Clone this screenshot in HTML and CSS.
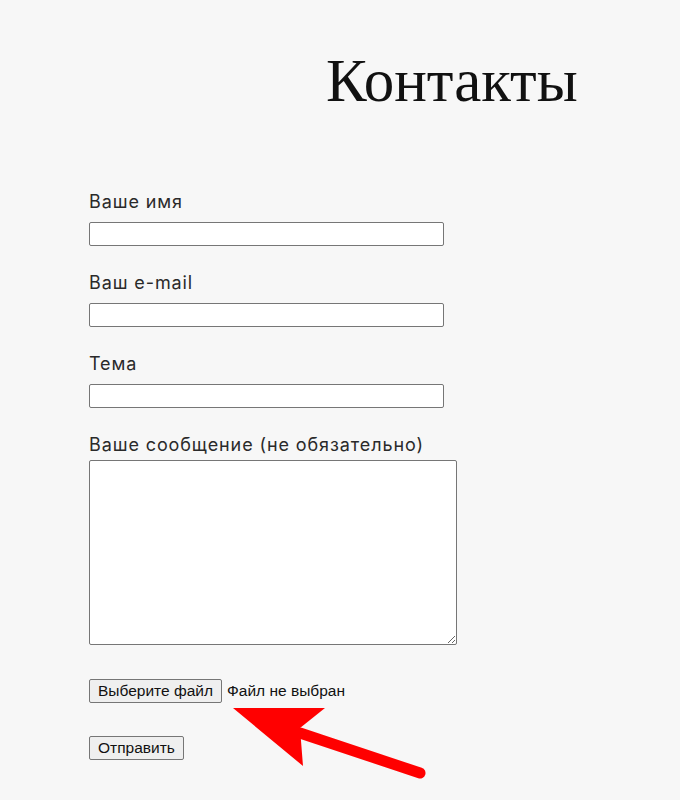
FILE: index.html
```html
<!DOCTYPE html>
<html lang="ru">
<head>
<meta charset="utf-8">
<title>Контакты</title>
<link rel="stylesheet" href="styles.css">
</head>
<body>
<main class="page">
  <h1 class="title">Контакты</h1>
  <form class="contact-form">
    <div class="field">
      <label class="label" for="name">Ваше имя</label>
      <input class="input" id="name" type="text">
    </div>
    <div class="field">
      <label class="label" for="email">Ваш e-mail</label>
      <input class="input" id="email" type="text">
    </div>
    <div class="field">
      <label class="label" for="topic">Тема</label>
      <input class="input" id="topic" type="text">
    </div>
    <div class="field field-message">
      <label class="label" for="msg">Ваше сообщение (не обязательно)</label>
      <textarea class="textarea" id="msg"></textarea>
    </div>
    <div class="file-row">
      <button type="button" class="btn">Выберите файл</button>
      <span class="file-status">Файл не выбран</span>
    </div>
    <div class="submit-row">
      <button type="button" class="btn">Отправить</button>
    </div>
  </form>
  <svg class="arrow" width="680" height="800" viewBox="0 0 680 800" aria-hidden="true">
    <line x1="300" y1="733" x2="420" y2="773" stroke="#ff0000" stroke-width="11" stroke-linecap="round"/>
    <polygon points="233,708 325,708 300,728 303,766" fill="#ff0000"/>
  </svg>
</main>
</body>
</html>
```

FILE: styles.css
```css
html, body {
  margin: 0;
  padding: 0;
}
body {
  background: #f7f7f7;
  color: #222;
}
.page {
  position: relative;
  width: 680px;
  min-height: 800px;
  padding-top: 51px;
  box-sizing: border-box;
}
.title {
  margin: 0;
  padding-left: 326px;
  font-family: "Liberation Serif", "Times New Roman", serif;
  font-weight: normal;
  font-size: 61px;
  line-height: 60px;
  color: #111;
}
.contact-form {
  margin-top: 80px;
  padding-left: 89px;
  display: flex;
  flex-direction: column;
}
.field {
  display: flex;
  flex-direction: column;
  align-items: flex-start;
  margin-bottom: 26px;
}
.field-message {
  margin-bottom: 34px;
}
.label {
  font-family: Inter, "Noto Sans", sans-serif;
  font-size: 18px;
  letter-spacing: 0.9px;
  line-height: 22px;
  color: #2a2a2a;
  margin-bottom: 9px;
}
.field-message .label {
  margin-bottom: 4px;
}
.input {
  display: block;
  width: 355px;
  height: 24px;
  box-sizing: border-box;
  margin: 0;
  border: 1px solid #767676;
  border-radius: 2px;
  background: #fff;
}
.textarea {
  display: block;
  width: 368px;
  height: 185px;
  box-sizing: border-box;
  margin: 0;
  border: 1px solid #767676;
  border-radius: 2px;
  background: #fff;
}
.file-row {
  display: flex;
  align-items: center;
  gap: 5px;
  margin-bottom: 33px;
}
.btn {
  height: 24px;
  box-sizing: border-box;
  margin: 0;
  padding: 0 8px;
  font-family: "Liberation Sans", Arial, sans-serif;
  font-size: 15.5px;
  color: #111;
  background: #efefef;
  border: 1px solid #767676;
  border-radius: 2px;
}
.file-status {
  font-family: "Liberation Sans", Arial, sans-serif;
  font-size: 15.5px;
  color: #111;
}
.submit-row {
  display: flex;
}
.arrow {
  position: absolute;
  left: 0;
  top: 0;
  pointer-events: none;
}
```
